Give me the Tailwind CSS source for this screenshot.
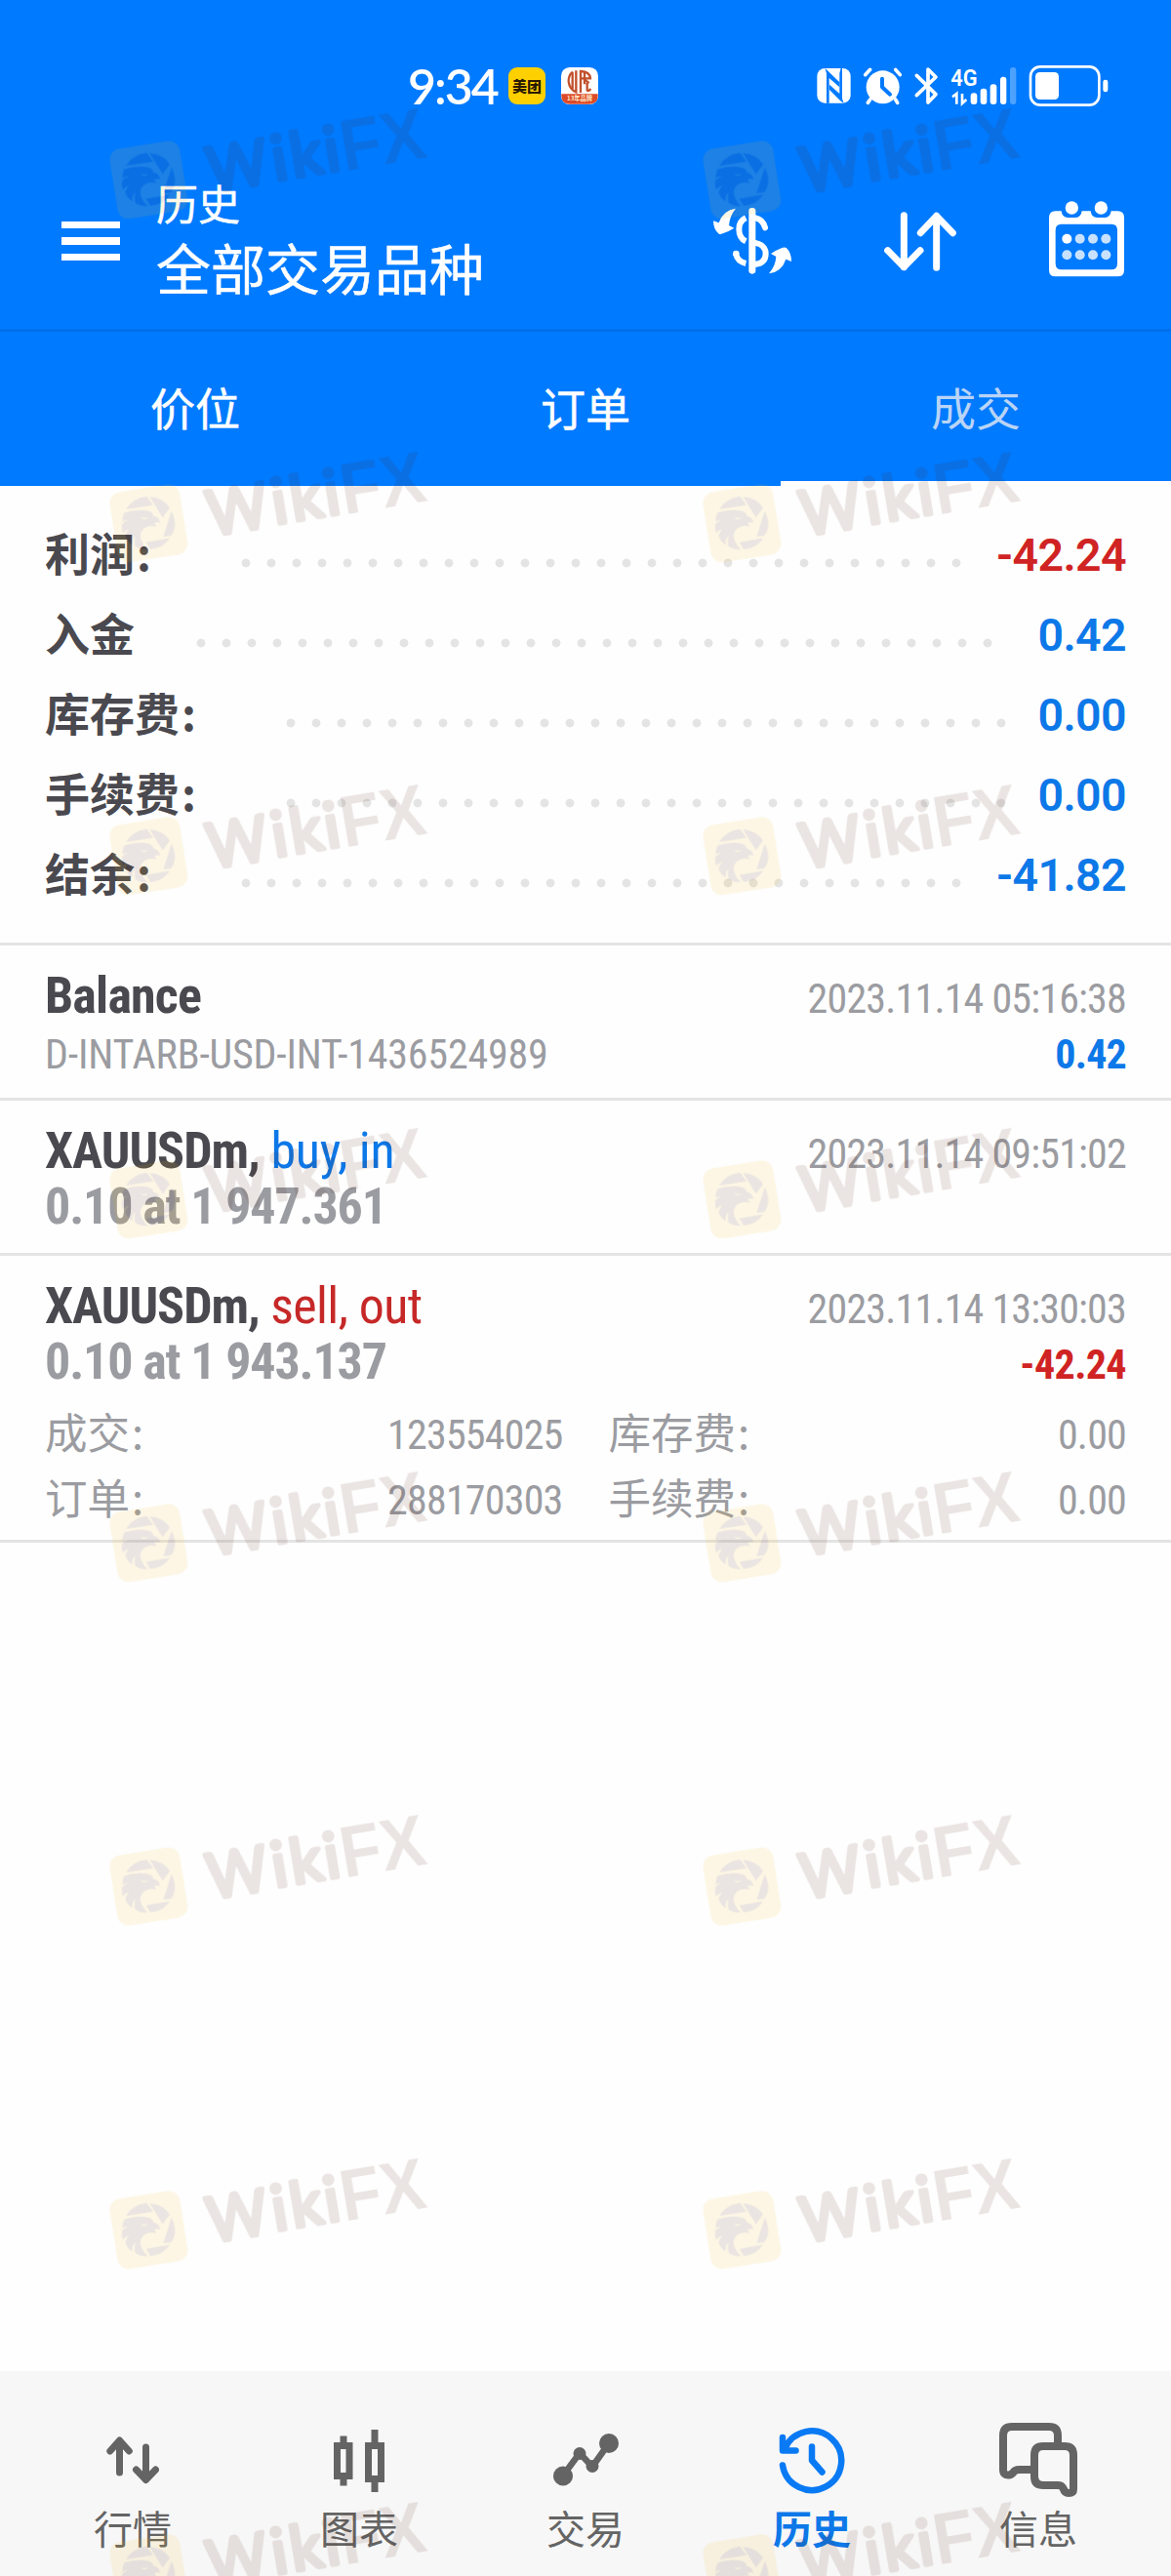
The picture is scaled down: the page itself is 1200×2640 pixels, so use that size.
<!DOCTYPE html>
<html lang="zh-CN">
  <head>
    <meta charset="UTF-8" />
    <meta name="viewport" content="width=device-width, initial-scale=1" />
    <title>历史</title>
    <script src="https://cdn.jsdelivr.net/npm/@tailwindcss/browser@4"></script>
  </head>

  <body class="relative w-[1200px] h-[2640px] overflow-hidden bg-[#fefefe] flex flex-col font-['Noto_Sans_CJK_SC',sans-serif]">
    <!-- Header -->
    <header class="bg-[#007aff] text-white">
      <!-- Status bar -->
      <div class="h-[157px] pt-[19px] pl-[418px] pr-[65px] flex items-center">
        <span class="w-[103px] text-[50px] leading-none font-['Lato',sans-serif] font-semibold tracking-[-2px]">9:34</span>
        <span class="w-[38px] h-[38px] rounded-[9px] bg-[#ffd000] text-[#2a1a00] text-[15px] leading-[37px] font-black text-center">美团</span>
        <svg class="ml-[16px] w-[38px] h-[38px] overflow-visible" viewBox="0 0 114 114">
          <rect width="114" height="114" rx="26" fill="#fff" />
          <path d="M1 82H113V88Q113 113 88 113H26Q1 113 1 88Z" fill="#dc4a28" />
          <g fill="none" stroke="#c2502c" stroke-width="7">
            <path d="M36 14Q22 24 23 44Q26 68 46 76V10" />
            <path d="M35 16V68" />
            <path d="M60 78V12Q89 14 90 34H62M72 14V52M72 38L86 48M80 48V70Q84 76 91 66" />
          </g>
          <text x="57" y="103" text-anchor="middle" font-size="19" font-weight="700" textLength="78" lengthAdjust="spacingAndGlyphs" fill="#ffe9c8">13年品牌</text>
        </svg>
        <svg class="ml-auto w-[298px] h-[42px] overflow-visible" viewBox="108 51 894 126" fill="#fff">
          <!-- nfc -->
          <rect x="109" y="60" width="103" height="107" rx="24" />
          <path d="M133 60Q142 66 150 76L178 103V118L146 90V167H138V76Q136 66 133 60Z" fill="#007aff" />
          <path d="M147 110L178 138V76Q180 66 182 60H186V152Q188 160 191 167Q182 162 176 155L147 126Z" fill="#007aff" />
          <!-- alarm -->
          <circle cx="311" cy="118" r="51" />
          <path d="M257 80L272 64M350 64L364 80M272 156L265 166M350 156L356 166" stroke="#fff" stroke-width="11" stroke-linecap="round" />
          <path d="M309 92V118L333 140" fill="none" stroke="#007aff" stroke-width="12" stroke-linecap="round" stroke-linejoin="round" />
          <!-- bluetooth -->
          <path d="M415 82L474 140L450 165V63L474 87L415 143" fill="none" stroke="#fff" stroke-width="11" stroke-linecap="round" stroke-linejoin="round" />
          <!-- signal -->
          <text x="520" y="113" font-family="Roboto" font-size="74" font-weight="600" textLength="82" lengthAdjust="spacingAndGlyphs">4G</text>
          <path d="M525 148L538 138V170M555 138V168L568 156" fill="none" stroke="#fff" stroke-width="8" />
          <rect x="581" y="136" width="20" height="35" rx="9" />
          <rect x="611" y="122" width="20" height="49" rx="9" />
          <rect x="641" y="109" width="20" height="62" rx="9" />
          <rect x="672" y="86" width="19" height="85" rx="9" />
          <rect x="702" y="57" width="19" height="114" rx="9" opacity=".3" />
          <!-- battery -->
          <rect x="765" y="55" width="211" height="118" rx="30" fill="none" stroke="#fff" stroke-width="8" />
          <rect x="780" y="72" width="72" height="84" rx="13" />
          <rect x="988" y="95" width="15" height="38" rx="7" />
        </svg>
      </div>

      <!-- Toolbar -->
      <div class="h-[180px] pl-[63px] pr-[48px] flex items-center">
        <div class="w-[60px] flex flex-col gap-[9px]">
          <i class="h-[7.5px] bg-white"></i>
          <i class="h-[7.5px] bg-white"></i>
          <i class="h-[7.5px] bg-white"></i>
        </div>
        <div class="ml-[37px] -mt-[14px] leading-[66px] [-webkit-text-stroke:0.5px_white]">
          <p class="text-[43px]">历史</p>
          <h1 class="text-[56px]">全部交易品种</h1>
        </div>
        <svg class="ml-auto w-[80px] h-[68px]" viewBox="150 129 240 204" fill="#fff">
          <rect x="259" y="129" width="21" height="203" rx="10" />
          <path d="M250 160Q229 170 229 194Q229 222 250 232" fill="none" stroke="#fff" stroke-width="18" />
          <path d="M250 300Q224 294 219 270" fill="none" stroke="#fff" stroke-width="18" />
          <circle cx="220" cy="270" r="10" />
          <path d="M278 160Q302 164 309 190M276 236Q311 242 311 270Q311 300 276 303" fill="none" stroke="#fff" stroke-width="18" stroke-linecap="round" />
          <path d="M219 131Q180 136 167 175L150 169Q150 196 167 209Q172 212 179 208Q195 203 214 191L198 183Q200 154 219 131Z" />
          <path d="M321 331Q360 326 373 287L390 294Q390 267 375 253Q370 249 361 252Q345 258 327 270L343 279Q341 308 321 331Z" />
        </svg>
        <svg class="ml-[95px] w-[74px] h-[61px]" viewBox="675 139 222 183" fill="none" stroke="#fff" stroke-width="21" stroke-linecap="round" stroke-linejoin="round">
          <path d="M736 150V309M686 258L736 309L786 258M836 311V152M787 204L836 152L886 204" />
        </svg>
        <svg class="ml-[95px] -mt-[4px] w-[77px] h-[78px]" viewBox="1182 110 231 234" fill="#fff">
          <path fill-rule="evenodd" d="M1202 141H1220Q1222 161 1240 161H1264Q1280 161 1283 141H1310Q1312 161 1330 161H1354Q1370 161 1373 141H1393Q1413 141 1413 161V322Q1413 342 1393 342H1202Q1182 342 1182 322V161Q1182 141 1202 141ZM1220 181Q1202 181 1202 200V302Q1202 321 1220 321H1374Q1392 321 1392 302V200Q1392 181 1374 181Z" />
          <circle cx="1252" cy="131" r="20" />
          <circle cx="1342" cy="131" r="20" />
          <circle cx="1237" cy="226" r="15" />
          <g opacity=".78">
            <circle cx="1277" cy="226" r="15" />
            <circle cx="1317" cy="226" r="15" />
            <circle cx="1357" cy="226" r="15" />
            <circle cx="1237" cy="276" r="15" />
            <circle cx="1277" cy="276" r="15" />
            <circle cx="1317" cy="276" r="15" />
            <circle cx="1357" cy="276" r="15" />
          </g>
        </svg>
      </div>

      <!-- Tabs -->
      <nav class="h-[161px] grid grid-cols-3 border-t-[3px] border-[#0070ea] text-[46px] leading-[153px] text-center">
        <a class="[-webkit-text-stroke:0.5px_white]">价位</a>
        <a class="[-webkit-text-stroke:0.5px_white]">订单</a>
        <a class="h-full border-b-[6px] border-[#fefefe] text-[#b9d4f6]">成交</a>
      </nav>
    </header>

    <!-- Summary -->
    <section class="pt-[28px] pb-[30px] border-b-[3px] border-[#e4e4e4] text-[46px] font-bold text-[#4a494f]">
      <div class="h-[82px] pl-[46px] pr-[46px] flex items-center">
        <span class="w-[193px] -mt-[4px]">利润<span class="ml-[2px]">:</span></span>
        <i class="mt-[20px] w-[754px] h-[26px] bg-[radial-gradient(circle,#e4e4e4_4px,transparent_4.8px)] bg-[length:26px_26px]"></i>
        <b class="ml-auto mt-[5px] font-['Roboto'] font-semibold tracking-[-0.6px] text-[46.5px] text-[#d02323]">-42.24</b>
      </div>
      <div class="h-[82px] pl-[46px] pr-[46px] flex items-center">
        <span class="w-[147px] -mt-[4px]">入金</span>
        <i class="mt-[20px] w-[832px] h-[26px] bg-[radial-gradient(circle,#e4e4e4_4px,transparent_4.8px)] bg-[length:26px_26px]"></i>
        <b class="ml-auto mt-[5px] font-['Roboto'] font-semibold tracking-[-0.6px] text-[46.5px] text-[#0d78e8]">0.42</b>
      </div>
      <div class="h-[82px] pl-[46px] pr-[46px] flex items-center">
        <span class="w-[239px] -mt-[4px]">库存费<span class="ml-[2px]">:</span></span>
        <i class="mt-[20px] w-[754px] h-[26px] bg-[radial-gradient(circle,#e4e4e4_4px,transparent_4.8px)] bg-[length:26px_26px]"></i>
        <b class="ml-auto mt-[5px] font-['Roboto'] font-semibold tracking-[-0.6px] text-[46.5px] text-[#0d78e8]">0.00</b>
      </div>
      <div class="h-[82px] pl-[46px] pr-[46px] flex items-center">
        <span class="w-[239px] -mt-[4px]">手续费<span class="ml-[2px]">:</span></span>
        <i class="mt-[20px] w-[754px] h-[26px] bg-[radial-gradient(circle,#e4e4e4_4px,transparent_4.8px)] bg-[length:26px_26px]"></i>
        <b class="ml-auto mt-[5px] font-['Roboto'] font-semibold tracking-[-0.6px] text-[46.5px] text-[#0d78e8]">0.00</b>
      </div>
      <div class="h-[82px] pl-[46px] pr-[46px] flex items-center">
        <span class="w-[193px] -mt-[4px]">结余<span class="ml-[2px]">:</span></span>
        <i class="mt-[20px] w-[754px] h-[26px] bg-[radial-gradient(circle,#e4e4e4_4px,transparent_4.8px)] bg-[length:26px_26px]"></i>
        <b class="ml-auto mt-[5px] font-['Roboto'] font-semibold tracking-[-0.6px] text-[46.5px] text-[#0d78e8]">-41.82</b>
      </div>
    </section>

    <!-- Deals -->
    <main class="flex-1 font-['Roboto'] [font-stretch:condensed] text-[42px] tracking-[-0.8px] text-[#9b9ca1]">
      <article class="h-[159px] pl-[46px] pr-[46px] pt-[22.5px] border-b-[3px] border-[#e4e4e4]">
        <div class="h-[57px] leading-[57px] flex items-baseline justify-between">
          <b class="text-[52px] text-[#4a494f]">Balance</b>
          <span>2023.11.14 05:16:38</span>
        </div>
        <div class="leading-[64px] flex items-baseline justify-between">
          <span class="tracking-[-0.2px]">D-INTARB-USD-INT-1436524989</span>
          <b class="text-[#0d78e8]">0.42</b>
        </div>
      </article>
      <article class="h-[159px] pl-[46px] pr-[46px] pt-[22.5px] border-b-[3px] border-[#e4e4e4]">
        <div class="h-[57px] leading-[57px] flex items-baseline justify-between">
          <p class="text-[52px] tracking-[-0.3px] text-[#0d78e8]"><b class="tracking-[-1px] text-[#4a494f]">XAUUSDm,</b> buy, in</p>
          <span>2023.11.14 09:51:02</span>
        </div>
        <div class="leading-[57px]">
          <b class="text-[52px] tracking-[-1.15px]">0.10 at 1 947.361</b>
        </div>
      </article>
      <article class="h-[294px] pl-[46px] pr-[46px] pt-[22.5px] border-b-[3px] border-[#e4e4e4]">
        <div class="h-[57px] leading-[57px] flex items-baseline justify-between">
          <p class="text-[52px] tracking-[-0.6px] text-[#c62828]"><b class="tracking-[-1px] text-[#4a494f]">XAUUSDm,</b> sell, out</p>
          <span>2023.11.14 13:30:03</span>
        </div>
        <div class="h-[57px] leading-[57px] flex items-baseline justify-between">
          <b class="text-[52px] tracking-[-1.15px]">0.10 at 1 943.137</b>
          <b class="tracking-[-0.6px] text-[#d02323]">-42.24</b>
        </div>
        <div class="mt-[9.5px] grid grid-cols-2 gap-x-[47px] leading-[67px]">
          <div class="h-[67px] flex items-baseline justify-between">
            <span class="font-['Noto_Sans_CJK_SC'] text-[43.5px] tracking-normal">成交<span class="ml-[2px]">:</span></span>
            <span>123554025</span>
          </div>
          <div class="h-[67px] flex items-baseline justify-between">
            <span class="font-['Noto_Sans_CJK_SC'] text-[43.5px] tracking-normal">库存费<span class="ml-[2px]">:</span></span>
            <span>0.00</span>
          </div>
          <div class="h-[67px] flex items-baseline justify-between">
            <span class="font-['Noto_Sans_CJK_SC'] text-[43.5px] tracking-normal">订单<span class="ml-[2px]">:</span></span>
            <span>288170303</span>
          </div>
          <div class="h-[67px] flex items-baseline justify-between">
            <span class="font-['Noto_Sans_CJK_SC'] text-[43.5px] tracking-normal">手续费<span class="ml-[2px]">:</span></span>
            <span>0.00</span>
          </div>
        </div>
      </article>
    </main>

    <!-- Bottom navigation -->
    <footer class="h-[210px] pt-[49px] pl-[20px] pr-[20px] grid grid-cols-5 bg-[#f7f7f7] text-[40px] leading-[55px] text-[#646464] text-center">
      <a class="flex flex-col items-center">
        <svg class="h-[84px] w-[54px]" viewBox="0 0 54 84" fill="none" stroke="#646464" stroke-width="7" stroke-linecap="round" stroke-linejoin="round">
          <path d="M13.5 55V22.5M3.8 33L13.5 22L23.3 33M40.5 29V62M30.5 52L40.5 62.5L50.5 52" />
        </svg>
        行情
      </a>
      <a class="flex flex-col items-center">
        <svg class="h-[84px] w-[52px]" viewBox="0 0 52 84" fill="none" stroke="#646464" stroke-width="7">
          <path d="M10 17.5V24M10 62V68.5M42 11V24M42 65V75M3.5 27.5H16V58.5H3.5ZM35.5 27.5H48.500V61.500H35.5Z" />
        </svg>
        图表
      </a>
      <a class="flex flex-col items-center">
        <svg class="h-[84px] w-[67px]" viewBox="0 0 67 84" fill="#646464">
          <path d="M10 58L27 35L40 49L57 25" fill="none" stroke="#646464" stroke-width="6.500" />
          <circle cx="10" cy="58.500" r="10" />
          <circle cx="27" cy="35.500" r="6.500" />
          <circle cx="40" cy="48.500" r="6.500" />
          <circle cx="57" cy="25" r="10" />
        </svg>
        交易
      </a>
      <a class="flex flex-col items-center font-bold text-[#0d78e8]">
        <svg class="h-[84px] w-[68px]" viewBox="0 0 68 84" fill="none" stroke="#0a7af4" stroke-width="6.500" stroke-linecap="round" stroke-linejoin="round">
          <path d="M4 47.500A30.300 30.300 0 1 0 6 31M4 19V32.500H17.500M34 28.500V42.500L44.500 54.500" />
        </svg>
        历史
      </a>
      <a class="flex flex-col items-center">
        <svg class="h-[84px] w-[80px]" viewBox="0 0 80 84" fill="none" stroke="#646464" stroke-width="8" stroke-linejoin="round">
          <path d="M60 26V17Q60 8 51 8H13Q4 8 4 17V52Q4 58 10 57.500Q13 57 16 53Q18 52 21 52H34" />
          <path d="M45 28H67Q76 28 76 37V72Q76 76 71 76Q67 76 65.500 71Q64 68 60 68H45Q36 68 36 59V37Q36 28 45 28Z" />
        </svg>
        信息
      </a>
    </footer>

    <!-- Watermark layer -->
    <svg class="absolute inset-0 w-[1200px] h-[2640px] pointer-events-none" viewBox="0 0 1200 2640">
      <symbol id="wm" width="370" height="150" viewBox="0 0 1110 450">
        <g opacity=".118">
          <rect x="-109" y="-109" width="218" height="218" rx="34" transform="translate(187 280) rotate(-9)" fill="#f0bd28" />
          <g fill="#5a2818">
            <path d="M117 237Q136 203 181 197L201 224Z" />
            <path d="M190 198Q232 202 252 232L230 262Z" />
            <path d="M257 242Q279 286 256 318L232 321Z" />
            <path d="M179 338L252 325Q232 357 192 360Z" />
            <path d="M112 247Q150 234 188 242Q201 247 201 257Q219 260 223 279Q214 274 204 279Q208 284 211 290Q186 284 172 296Q155 312 165 334Q171 350 184 360Q160 362 145 350Q142 336 145 318Q134 332 137 346Q121 338 115 318Q119 306 127 297Q111 304 108 311Q102 293 106 281Q116 272 126 270Q112 269 106 275Q106 258 112 247Z" />
            <path d="M162 261Q173 266 185 261Q179 270 169 267Z" fill="#f0bd28" />
            <g transform="translate(805 252) rotate(-9.500)">
              <g font-family="Lato" font-size="190" stroke="#5a2818" stroke-width="14" stroke-linejoin="round">
                <text x="-432" y="-5" textLength="186" lengthAdjust="spacingAndGlyphs">W</text>
                <text x="-231 -173 -67" y="-8">iki</text>
              </g>
              <text x="-16" y="0" font-family="Liberation Sans" font-weight="700" font-size="222" textLength="262" lengthAdjust="spacingAndGlyphs">FX</text>
            </g>
          </g>
        </g>
      </symbol>
      <use href="#wm" x="90" y="91" />
      <use href="#wm" x="698" y="91" />
      <use href="#wm" x="90" y="443" />
      <use href="#wm" x="698" y="443" />
      <use href="#wm" x="90" y="784" />
      <use href="#wm" x="698" y="784" />
      <use href="#wm" x="90" y="1136" />
      <use href="#wm" x="698" y="1136" />
      <use href="#wm" x="90" y="1488" />
      <use href="#wm" x="698" y="1488" />
      <use href="#wm" x="90" y="1840" />
      <use href="#wm" x="698" y="1840" />
      <use href="#wm" x="90" y="2192" />
      <use href="#wm" x="698" y="2192" />
      <use href="#wm" x="90" y="2544" />
      <use href="#wm" x="698" y="2544" />
    </svg>
  </body>
</html>
